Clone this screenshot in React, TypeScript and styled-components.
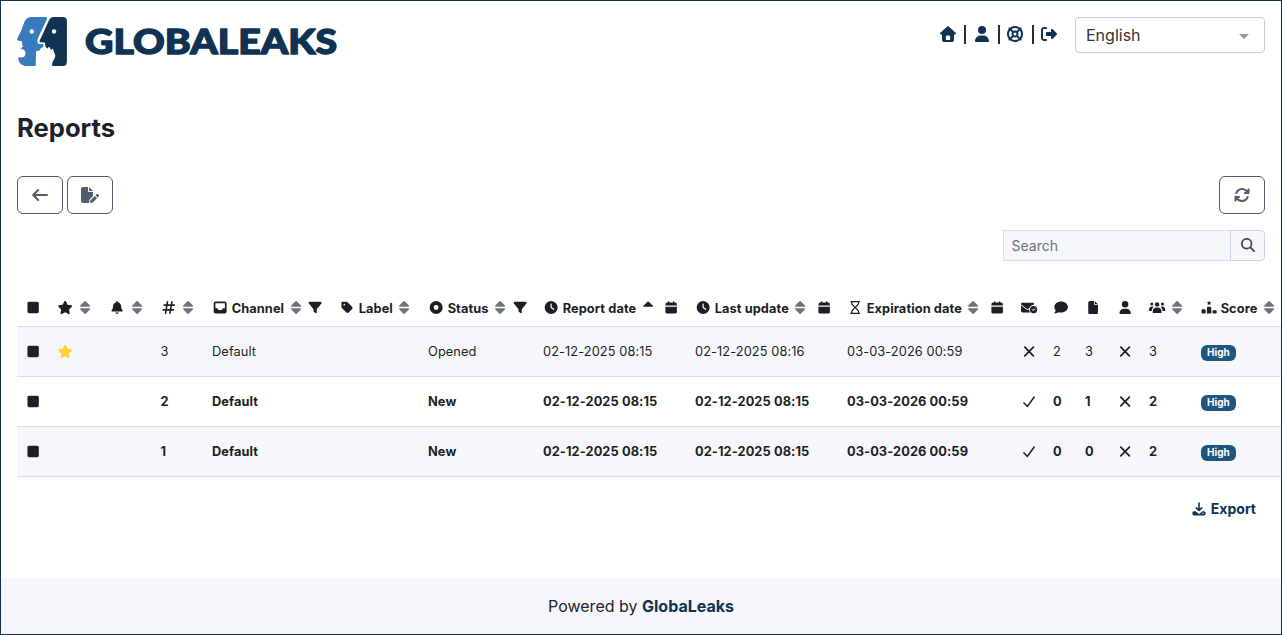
import React from "react";
import styled, { createGlobalStyle } from "styled-components";
import {
  FaArrowsRotate, FaBell, FaCircleDot, FaClock, FaComment, FaEnvelopeCircleCheck, FaFile,
  FaFilePen, FaFilter, FaLifeRing, FaMagnifyingGlass, FaRegHourglass, FaRightFromBracket,
  FaSquare, FaStar, FaTag, FaUser,
} from "react-icons/fa6";

const GlobalStyle = createGlobalStyle`
  *, *::before, *::after { box-sizing: border-box; }
  body { margin: 0; background: #fff; color: #212529; font: 16px/24px Inter, sans-serif; }
  button, input { font-family: inherit; }
  svg { flex: none; }
`;

const Page = styled.div`
  display: flex;
  flex-direction: column;
  height: 635px;
  border: 1px solid #103253;
  overflow: hidden;
`;
const Header = styled.header`
  display: flex;
  justify-content: space-between;
  align-items: flex-start;
  padding: 16px 16px 0;
  height: 98px;
`;
const HeaderTools = styled.div`
  display: flex;
  align-items: flex-start;
`;
const Nav = styled.nav`
  display: flex;
  align-items: center;
  height: 34px;
  margin-right: 16px;
  color: #103253;
  font-size: 16px;
  svg { width: 20px; height: 16px; }
`;
const Divider = styled.span`
  width: 2px;
  height: 19px;
  margin: 0 5.4px 0 6.2px;
  background: #2a2a38;
`;
const LanguageSelect = styled.div`
  display: flex;
  align-items: center;
  justify-content: space-between;
  width: 190px;
  height: 36px;
  padding: 0 15px 0 10px;
  border: 1px solid #ccc;
  border-radius: 4px;
  color: #333;
`;
const Caret = styled.i`
  border: 5px solid transparent;
  border-top-color: #999;
  border-bottom: 0;
  margin-top: 2px;
`;
const Title = styled.h1`
  margin: 0;
  padding: 13px 16px 0;
  height: 77px;
  font-size: 25.6px;
  line-height: 32px;
  font-weight: 700;
  color: #1d1f2a;
`;
const Toolbar = styled.div`
  display: flex;
  gap: 4px;
  padding: 0 16px;
`;
const Spacer = styled.div`
  flex: 1;
`;
const ToolButton = styled.button`
  display: grid;
  place-items: center;
  width: 46px;
  height: 38px;
  padding: 0;
  border: 1px solid #535c6b;
  border-radius: 6px;
  background: #fff;
  color: #535c6b;
  font-size: 16px;
  svg { width: 20px; height: 1em; }
`;
const SearchBar = styled.div`
  display: flex;
  justify-content: flex-end;
  padding: 16px 16px 0;
`;
const SearchInput = styled.input`
  width: 228px;
  height: 31px;
  padding: 0 7.5px;
  border: 1px solid #d8dfeb;
  border-radius: 0;
  background: #f5f7fb;
  font-size: 14px;
  &::placeholder { color: #6b7280; opacity: 1; }
`;
const SearchButton = styled.button`
  display: grid;
  place-items: center;
  width: 35px;
  height: 31px;
  margin-left: -1px;
  padding: 0 0 1px;
  border: 1px solid #cbd5e6;
  border-radius: 0 4px 4px 0;
  background: #f5f7fb;
  color: #434750;
  font-size: 14px;
`;
const Table = styled.div`
  margin: 28px 0 0 16px;
  color: #1d1f26;
  font-size: 12.8px;
  letter-spacing: 0.09px;
`;
const Row = styled.div<{ $bold?: boolean; $striped?: boolean; $head?: boolean }>`
  display: grid;
  grid-template-columns: 32px 52px 51.5px 51.5px 127px 89px 115px 152px 152px 174px 32px 32px 32px 32px 52px 96px;
  align-items: center;
  height: ${(p) => (p.$head ? 38 : 50)}px;
  padding-left: 8px;
  border-bottom: 1px solid #d5dfec;
  background: ${(p) => (p.$striped ? "#f5f7fb" : "#fff")};
  font-weight: ${(p) => (p.$bold ? 700 : 400)};
`;
const Cell = styled.div<{ $dated?: boolean }>`
  display: flex;
  align-items: center;
  gap: 3.4px;
  white-space: nowrap;
  > svg { width: 16.25px; height: 13px; overflow: visible; }
  > svg:last-child { margin-left: ${(p) => (p.$dated ? 3.6 : 0)}px; }
`;
const HeadLabel = styled.span`
  padding-top: 2px;
`;
const StarIcon = styled(FaStar)<{ $marked?: boolean }>`
  color: ${(p) => (p.$marked ? "#ffd43b" : "inherit")};
  transform: scale(1.03);
`;
const CommentIcon = styled(FaComment)`
  transform: scale(1.05);
`;
const SortMark = styled.svg`
  fill: #6c757d;
`;
const Badge = styled.span`
  margin-top: 3px;
  padding: 0 6px 1px;
  border-radius: 6px;
  background: #20557f;
  color: #fff;
  font-size: 10px;
  letter-spacing: 0;
  line-height: 15px;
  font-weight: 700;
`;
const Export = styled.div`
  display: flex;
  align-items: center;
  justify-content: flex-end;
  gap: 5px;
  padding: 20px 25px 0 0;
  color: #103253;
  font-size: 14px;
  font-weight: 700;
`;
const Footer = styled.footer`
  display: grid;
  place-items: center;
  height: 56px;
  margin-top: auto;
  background: #f5f7fb;
  b { color: #103253; }
`;

const Logo = () => (
  <svg width="322" height="52" viewBox="0 0 322 52">
    <path fill="#377bbc" d="M14.7 0H28.5Q31 0 29.8 2.5L21.3 20.3Q19 26.8 22.5 27H26.3L26.5 30L24 31L22.5 33.5L19 34.3L18.7 49H8Q1 47.5 1.2 40.3Q7.5 41 8 38.5Q10.5 33 3.2 31.4Q7.5 29.5 5.2 28L5 24.3L0 23.2Q.2 21 3.7 14.7L7.3 5.2Q9.2 0 14.7 0Z" />
    <path fill="#103253" d="M36.8 0H45.7Q49.9 0 49.9 4.2V44.8Q49.9 49 45.7 49H35.3Q34.6 45 36.8 43Q39.4 39 37.3 36L35.8 31.5L34.2 33L32 29.5L30.5 31.5L28.6 30L27.8 25.4L22.4 25.2Q22.3 23.5 24 20.7L32 3.2Q33.4 0 36.8 0Z" />
    <circle cx="14.8" cy="14.5" r="2.2" fill="#fff" />
    <circle cx="37" cy="14.5" r="2.2" fill="#fff" />
    <text x="68" y="37.2" fill="#103253" stroke="#103253" strokeWidth="1.3" strokeLinejoin="round" fontFamily="Lato, sans-serif" fontSize="33.5" fontWeight="900" textLength="252" lengthAdjust="spacingAndGlyphs">GLOBALEAKS</text>
  </svg>
);

const HomeIcon = () => (
  <svg viewBox="0 0 20 16" fill="currentColor">
    <path fillRule="evenodd" d="M9.3.4a1 1 0 0 1 1.4 0L17.6 6.8c.8.7.3 1.6-.5 1.6H16V14a2 2 0 0 1-2 2H6a2 2 0 0 1-2-2V8.4H2.9c-.8 0-1.3-.9-.5-1.6ZM8.9 9.6a1 1 0 0 0-1 1V14h4.2v-3.4a1 1 0 0 0-1-1Z" />
  </svg>
);
const BackIcon = () => (
  <svg viewBox="0 0 20 16" fill="none" stroke="currentColor" strokeWidth="2" strokeLinecap="round" strokeLinejoin="round">
    <path d="M17 8H3.2M8.2 3 3.2 8l5 5" />
  </svg>
);
const Sort = ({ active }: { active?: boolean }) => (
  <SortMark viewBox="0 0 16.25 13">
    {active ? (
      <path fill="#1d1f26" d="M3.6 5.8Q2.7 5.5 3.3 4.8L7.5.7Q8.1.1 8.7.7L12.9 4.8Q13.5 5.5 12.6 5.8Z" />
    ) : (
      <path d="M3.6 5.7Q2.7 5.3 3.3 4.6L7.5.3Q8.1-.2 8.7.3L12.9 4.6Q13.5 5.3 12.6 5.7ZM3.6 7.3H12.6Q13.5 7.7 12.9 8.4L8.7 12.7Q8.1 13.2 7.5 12.7L3.3 8.4Q2.7 7.7 3.6 7.3Z" />
    )}
  </SortMark>
);
const CrossIcon = () => (
  <svg viewBox="0 0 16.25 13" fill="none" stroke="currentColor" strokeWidth="1.7" strokeLinecap="round">
    <path d="M3.8 2.2 12.4 10.8M12.4 2.2 3.8 10.8" />
  </svg>
);
const CheckIcon = () => (
  <svg viewBox="0 0 16.25 13" fill="none" stroke="currentColor" strokeWidth="1.5" strokeLinecap="round" strokeLinejoin="round">
    <path d="M3 7.9 6.4 11.4 13.2 2" />
  </svg>
);
const HashIcon = () => (
  <svg viewBox="0 0 16.25 13" fill="none" stroke="currentColor" strokeWidth="1.6" strokeLinecap="round">
    <path d="M3.1 4.1H13.2M2.3 8.9H12.4M6.5.8 4.6 12.2M10.9.8 9 12.2" />
  </svg>
);
const InboxIcon = () => (
  <svg viewBox="0 0 16.25 13" fill="currentColor">
    <path fillRule="evenodd" d="M3.6.6H12.7A1.9 1.9 0 0 1 14.6 2.5V10.5A1.9 1.9 0 0 1 12.7 12.4H3.6A1.9 1.9 0 0 1 1.7 10.5V2.5A1.9 1.9 0 0 1 3.6.6ZM3.4 2.3V7.3H5.3L6.4 9H9.9L11 7.3H12.9V2.3Z" />
  </svg>
);
const CalendarIcon = () => (
  <svg viewBox="0 0 16.25 13" fill="currentColor">
    <path d="M4.2 1.6H4.9V.8Q5.6-.3 6.4.8V1.6H9.9V.8Q10.7-.3 11.4.8V1.6H12.1Q13.9 1.6 13.9 3.3V4.5H2.4V3.3Q2.4 1.6 4.2 1.6ZM2.4 5.7H13.9V10.9Q13.9 12.6 12.1 12.6H4.2Q2.4 12.6 2.4 10.9Z" />
  </svg>
);
const GroupIcon = () => (
  <svg viewBox="0 0 16.25 13" fill="currentColor">
    <circle cx="8.1" cy="3.4" r="2.2" />
    <circle cx="2.8" cy="3" r="1.5" />
    <circle cx="13.5" cy="3" r="1.5" />
    <path d="M3.8 12V10.2Q3.8 6.6 8.1 6.6T12.5 10.2V12ZM.1 10V8Q.2 5.5 3.2 5.4L4.7 5.8Q2.6 7.6 2.7 10ZM16.2 10V8Q16.1 5.5 13.1 5.4L11.6 5.8Q13.7 7.6 13.6 10Z" />
  </svg>
);
const RankingIcon = () => (
  <svg viewBox="0 0 16.25 13" fill="currentColor">
    <path d="m8.1-.2.7 1.4 1.6.2-1.2 1.1.3 1.5-1.4-.7-1.4.7.3-1.5-1.2-1.1 1.6-.2ZM7 5.8H9.2Q10.3 5.8 10.3 6.9V12.6H5.9V6.9Q5.9 5.8 7 5.8ZM1.6 8.2H3.6Q4.7 8.2 4.7 9.3V11.5Q4.7 12.6 3.6 12.6H1.6Q.5 12.6.5 11.5V9.3Q.5 8.2 1.6 8.2ZM12.6 9.3H14.6Q15.7 9.3 15.7 10.3V11.6Q15.7 12.6 14.6 12.6H12.6Q11.5 12.6 11.5 11.6V10.3Q11.5 9.3 12.6 9.3Z" />
  </svg>
);
const ExportIcon = () => (
  <svg width="14" height="14" viewBox="0 0 14 14">
    <path d="M7 1V8M4.3 5.9 7 8.5 9.7 5.9" fill="none" stroke="currentColor" strokeWidth="1.6" strokeLinecap="round" strokeLinejoin="round" />
    <path fill="currentColor" fillRule="evenodd" d="M2 9.2H3.4L7 12 10.6 9.2H12A1.6 1.6 0 0 1 13.6 10.8V11.8A1.6 1.6 0 0 1 12 13.4H2A1.6 1.6 0 0 1 .4 11.8V10.8A1.6 1.6 0 0 1 2 9.2ZM11 10.6A.7.7 0 1 0 11 12A.7.7 0 1 0 11 10.6Z" />
  </svg>
);

const reports = [
  { id: 3, star: true, status: "Opened", updated: "02-12-2025 08:16", read: false, comments: 2, files: 3, users: 3 },
  { id: 2, star: false, status: "New", updated: "02-12-2025 08:15", read: true, comments: 0, files: 1, users: 2 },
  { id: 1, star: false, status: "New", updated: "02-12-2025 08:15", read: true, comments: 0, files: 0, users: 2 },
];

export default function App() {
  return (
    <Page>
      <GlobalStyle />
      <Header>
        <Logo />
        <HeaderTools>
          <Nav>
            <HomeIcon /><Divider /><FaUser /><Divider /><FaLifeRing /><Divider /><FaRightFromBracket />
          </Nav>
          <LanguageSelect>English<Caret /></LanguageSelect>
        </HeaderTools>
      </Header>
      <Title>Reports</Title>
      <Toolbar>
        <ToolButton><BackIcon /></ToolButton>
        <ToolButton><FaFilePen /></ToolButton>
        <Spacer />
        <ToolButton><FaArrowsRotate /></ToolButton>
      </Toolbar>
      <SearchBar>
        <SearchInput placeholder="Search" />
        <SearchButton><FaMagnifyingGlass /></SearchButton>
      </SearchBar>
      <Table>
        <Row $head $bold>
          <Cell><FaSquare /></Cell>
          <Cell><StarIcon /><Sort /></Cell>
          <Cell><FaBell /><Sort /></Cell>
          <Cell><HashIcon /><Sort /></Cell>
          <Cell><InboxIcon /><HeadLabel>Channel</HeadLabel><Sort /><FaFilter /></Cell>
          <Cell><FaTag /><HeadLabel>Label</HeadLabel><Sort /></Cell>
          <Cell><FaCircleDot /><HeadLabel>Status</HeadLabel><Sort /><FaFilter /></Cell>
          <Cell $dated><FaClock /><HeadLabel>Report date</HeadLabel><Sort active /><CalendarIcon /></Cell>
          <Cell $dated><FaClock /><HeadLabel>Last update</HeadLabel><Sort /><CalendarIcon /></Cell>
          <Cell $dated><FaRegHourglass /><HeadLabel>Expiration date</HeadLabel><Sort /><CalendarIcon /></Cell>
          <Cell><FaEnvelopeCircleCheck /></Cell>
          <Cell><CommentIcon /></Cell>
          <Cell><FaFile /></Cell>
          <Cell><FaUser /></Cell>
          <Cell><GroupIcon /><Sort /></Cell>
          <Cell><RankingIcon /><HeadLabel>Score</HeadLabel><Sort /></Cell>
        </Row>
        {reports.map((r) => (
          <Row key={r.id} $bold={r.status === "New"} $striped={r.id !== 2}>
            <Cell><FaSquare /></Cell>
            <Cell>{r.star && <StarIcon $marked />}</Cell>
            <Cell />
            <Cell>{r.id}</Cell>
            <Cell>Default</Cell>
            <Cell />
            <Cell>{r.status}</Cell>
            <Cell>02-12-2025 08:15</Cell>
            <Cell>{r.updated}</Cell>
            <Cell>03-03-2026 00:59</Cell>
            <Cell>{r.read ? <CheckIcon /> : <CrossIcon />}</Cell>
            <Cell>{r.comments}</Cell>
            <Cell>{r.files}</Cell>
            <Cell><CrossIcon /></Cell>
            <Cell>{r.users}</Cell>
            <Cell><Badge>High</Badge></Cell>
          </Row>
        ))}
      </Table>
      <Export><ExportIcon />Export</Export>
      <Footer><span>Powered by <b>GlobaLeaks</b></span></Footer>
    </Page>
  );
}
